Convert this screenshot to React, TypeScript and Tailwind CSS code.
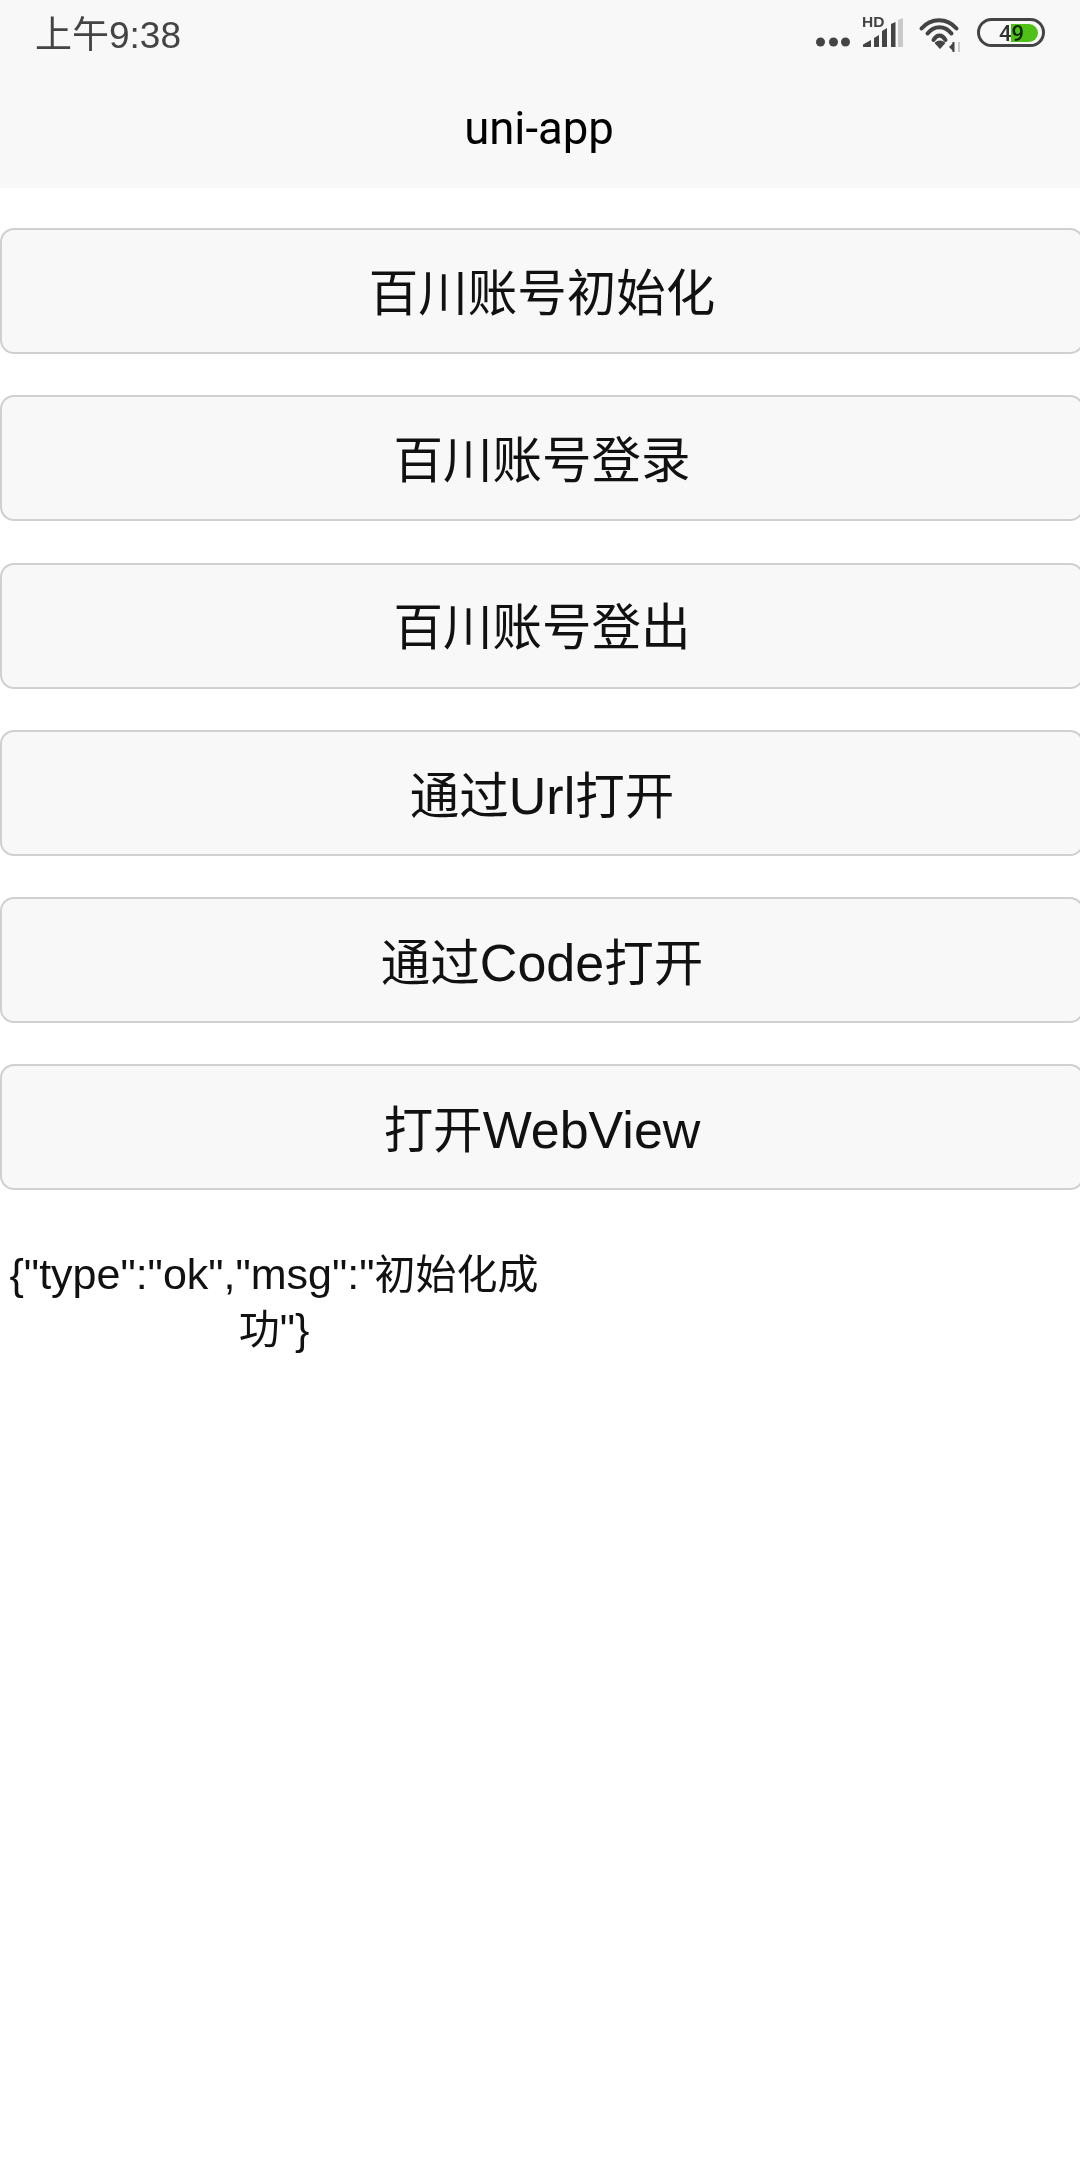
const labels = [
  "百川账号初始化",
  "百川账号登录",
  "百川账号登出",
  "通过Url打开",
  "通过Code打开",
  "打开WebView",
];

const fontStack = "font-['Liberation_Sans','Noto_Sans_CJK_SC',sans-serif]";

// latin runs are a bit bigger than the cjk ones in the screenshot
const Mixed = ({ text, latinClass }: { text: string; latinClass: string }) => (
  <>
    {text.split(/([\x00-\x7f]+)/).map((part, i) =>
      i % 2 === 1 ? (
        <span key={i} className={latinClass}>{part}</span>
      ) : (
        part
      )
    )}
  </>
);

const Dots = () => (
  <svg width="38" height="10" viewBox="0 0 38 10" className="mt-[19px]">
    <circle cx="8.5" cy="5" r="4.5" fill="#444" />
    <circle cx="21.5" cy="5" r="4.5" fill="#444" />
    <circle cx="33.5" cy="5" r="4.5" fill="#444" />
  </svg>
);

const Signal = () => (
  <div className="relative w-[42px] h-[30px] ml-[11px]">
    <span className="absolute left-px top-[-4px] text-[15.5px] leading-[16px] font-bold text-[#444] font-['Liberation_Sans',sans-serif]">HD</span>
    <svg width="42" height="30" viewBox="0 0 42 30" className="absolute left-0 top-0">
      <path d="M2 29v-2.5L10 22v7z" fill="#444" />
      <path d="M13 29V20l5-3v12z" fill="#444" />
      <path d="M21 29V13l5-3v19z" fill="#444" />
      <path d="M30 29V6l4.5-2v25z" fill="#444" />
      <path d="M37 29V2l5-2v29z" fill="#c9c9c9" />
    </svg>
  </div>
);

const Wifi = () => (
  <svg width="44" height="36" viewBox="0 0 44 36" className="ml-[15px] -mt-[2px]">
    <path d="M3.5 12.5C13 1.5 29 1.5 38.5 12.5" fill="none" stroke="#444" strokeWidth="4" strokeLinecap="round" />
    <path d="M9.5 17.5C16 9 27 9 33.5 17.5" fill="none" stroke="#444" strokeWidth="4" strokeLinecap="round" />
    <path d="M15.5 24C19 18 24 18 27.5 24" fill="none" stroke="#444" strokeWidth="4" strokeLinecap="round" />
    <path d="M17.5 27C20 24.5 24 24.5 26.5 27L22 32z" fill="#444" stroke="#444" strokeWidth="1.5" strokeLinejoin="round" />
    <path d="M35.5 26v10" stroke="#444" strokeWidth="2" />
    <path d="M31 31l4-4v8z" fill="#444" />
    <path d="M41 26v10" stroke="#ccc" strokeWidth="2" />
  </svg>
);

const Battery = () => (
  <div className="relative w-[68px] h-[29px] ml-[15px] rounded-full border-[3px] border-[#444]">
    <div className="absolute left-[31px] top-[3px] w-[27px] h-[18px] rounded-r-full bg-[#4fc016]" />
    <span className="absolute left-[19px] top-px text-[22px] leading-[24px] font-medium text-[#333] mix-blend-multiply font-['Roboto',sans-serif]">49</span>
  </div>
);

const App = () => {
  return (
    <div className={`w-[1080px] h-[2160px] bg-white overflow-hidden ${fontStack}`}>
      <div className="h-[188px] bg-[#f8f8f8]">
        <div className="flex h-[70px] pl-[35px] pr-[35px]">
          <div className="pt-px text-[37px] leading-[70px] text-[#444]">上午9:38</div>
          <div className="flex ml-auto pt-[18px]">
            <Dots />
            <Signal />
            <Wifi />
            <Battery />
          </div>
        </div>
        <div className="h-[118px] pr-[2px] flex items-center justify-center text-[45.5px] text-black font-['Roboto','Noto_Sans_CJK_SC',sans-serif]">uni-app</div>
      </div>
      <div className="pt-[40px]">
        {labels.map((label) => (
          <button
            key={label}
            type="button"
            className="flex items-center justify-center w-[1084px] h-[126px] pt-[6px] mb-[41.3px] bg-[#f8f8f8] border-2 border-[#d0d0d0] rounded-[14px] text-[49.5px] text-[#111]"
          >
            <span><Mixed text={label} latinClass="text-[52px]" /></span>
          </button>
        ))}
      </div>
      <div className="w-[548px] mt-[57px] text-center text-[41px] leading-[54px] text-[#111] break-all">
        <Mixed text={'{"type":"ok","msg":"初始化成功"}'} latinClass="text-[43px]" />
      </div>
    </div>
  );
};

export default App;
